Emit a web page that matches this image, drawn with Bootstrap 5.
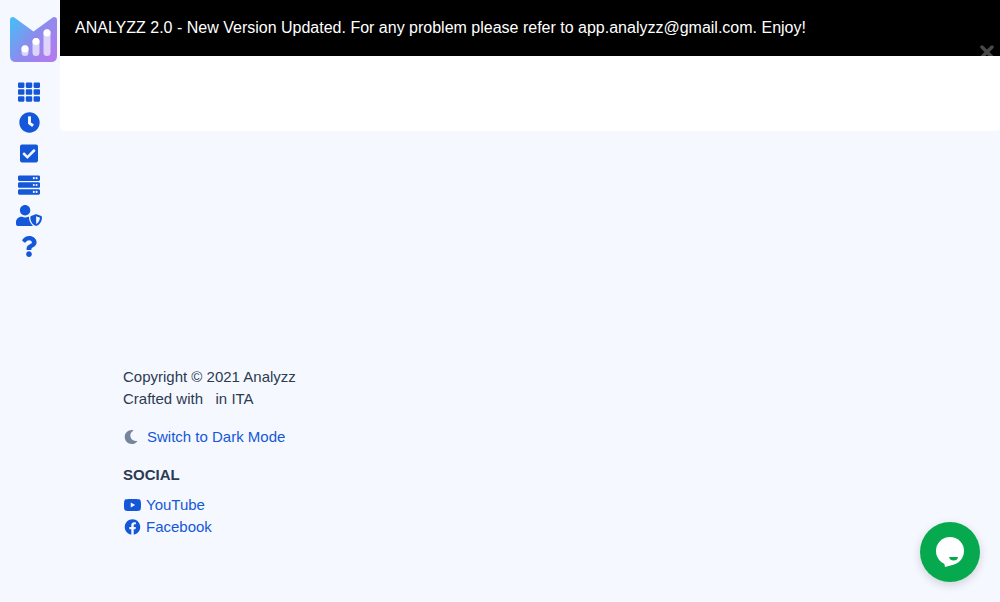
<!DOCTYPE html>
<html lang="en">
<head>
<meta charset="utf-8">
<meta name="viewport" content="width=device-width, initial-scale=1">
<title>Analyzz</title>
<link href="https://cdn.jsdelivr.net/npm/bootstrap@5.3.0/dist/css/bootstrap.min.css" rel="stylesheet">
<style>
  body { background: #f5f9ff; color: #2c3a52; font-family: "Liberation Sans", Arial, sans-serif; font-size: 15px; line-height: 22px; }
  a { color: #1457d9; text-decoration: none; }
  .side-rail { width: 60px; padding-top: 16px; }
  .side-rail .logo { display: block; margin-left: 10px; margin-bottom: 14px; }
  .side-rail .nav-link { height: 31px; padding: 0; color: #1457d9; width: 58px; }
  .side-rail svg, .site-footer svg { display: block; fill: currentColor; }
  .notice { height: 56px; background: #000; color: #fff; font-size: 16px; padding: 0 15px; }
  .notice .dismiss { top: 41px; right: 2px; padding: 4px; border: 0; background: none; color: #484848; line-height: 0; }
  .top-strip { height: 75px; background: #fff; }
  .site-footer { padding: 235px 63px 0; }
  .site-footer h6 { font-size: 15px; line-height: 22px; }
  .moon { color: #76849c; margin: 0 9px 0 1px; }
  .chat { right: 20px; bottom: 20px; width: 60px; height: 60px; background: #06a94d; box-shadow: 0 3px 10px rgba(0,0,0,.16); }
  .chat:hover { background: #06a94d; }
</style>
</head>
<body>
<div class="d-flex min-vh-100">
  <aside class="side-rail flex-shrink-0">
    <a class="logo" href="#" aria-label="Analyzz home">
      <svg width="47" height="46" viewBox="0 0 47 46">
        <defs><linearGradient id="brand" x1="0" y1="0" x2="1" y2=".7"><stop offset="0" stop-color="#43c0f8"/><stop offset=".55" stop-color="#8b8cee"/><stop offset="1" stop-color="#b07bee"/></linearGradient></defs>
        <path fill="url(#brand)" d="M0 4Q0 1 3 1Q4 1 5 2L23.500 15.500L42 2Q43 1 44 1Q47 1 47 4V40Q47 46 41 46H6Q0 46 0 40Z"/>
        <g fill="#fff" fill-opacity=".65"><rect x="11.500" y="29" width="7" height="11" rx="3.500"/><rect x="22.500" y="22" width="7" height="18" rx="3.500"/><rect x="33.500" y="13" width="7" height="27" rx="3.500"/></g>
        <g fill="#fff"><circle cx="15" cy="33" r="3.500"/><circle cx="26" cy="25.500" r="3.500"/><circle cx="37" cy="17" r="3.500"/></g>
      </svg>
    </a>
    <nav class="nav flex-column" aria-label="Main">
      <a class="nav-link d-flex align-items-center justify-content-center" href="#" aria-label="Dashboard"><svg width="22" height="22" viewBox="0 0 512 512"><path d="M24 32H126Q150 32 150 56V136Q150 160 126 160H24Q0 160 0 136V56Q0 32 24 32ZM205 32H307Q331 32 331 56V136Q331 160 307 160H205Q181 160 181 136V56Q181 32 205 32ZM386 32H488Q512 32 512 56V136Q512 160 488 160H386Q362 160 362 136V56Q362 32 386 32ZM24 192H126Q150 192 150 216V296Q150 320 126 320H24Q0 320 0 296V216Q0 192 24 192ZM205 192H307Q331 192 331 216V296Q331 320 307 320H205Q181 320 181 296V216Q181 192 205 192ZM386 192H488Q512 192 512 216V296Q512 320 488 320H386Q362 320 362 296V216Q362 192 386 192ZM24 352H126Q150 352 150 376V456Q150 480 126 480H24Q0 480 0 456V376Q0 352 24 352ZM205 352H307Q331 352 331 376V456Q331 480 307 480H205Q181 480 181 456V376Q181 352 205 352ZM386 352H488Q512 352 512 376V456Q512 480 488 480H386Q362 480 362 456V376Q362 352 386 352Z"/></svg></a>
      <a class="nav-link d-flex align-items-center justify-content-center" href="#" aria-label="History"><svg width="21" height="21" viewBox="0 0 512 512"><path d="M256 8C119 8 8 119 8 256s111 248 248 248 248-111 248-248S393 8 256 8zm57.100 350.100L224.900 294c-3.100-2.300-4.900-5.900-4.900-9.700V116c0-6.600 5.400-12 12-12h48c6.600 0 12 5.400 12 12v137.700l63.500 46.200c5.400 3.900 6.500 11.400 2.600 16.800l-28.200 38.800c-3.900 5.300-11.400 6.500-16.800 2.600z"/></svg></a>
      <a class="nav-link d-flex align-items-center justify-content-center" href="#" aria-label="Tasks"><svg width="18" height="21" viewBox="0 0 448 512"><path d="M400 480H48c-26.510 0-48-21.490-48-48V80c0-26.510 21.490-48 48-48h352c26.510 0 48 21.490 48 48v352c0 26.510-21.490 48-48 48zm-204.686-98.059l184-184c6.248-6.248 6.248-16.379 0-22.627l-22.627-22.627c-6.248-6.248-16.379-6.249-22.628 0L184 302.745l-70.059-70.059c-6.248-6.248-16.379-6.248-22.628 0l-22.627 22.627c-6.248 6.248-6.248 16.379 0 22.627l104 104c6.249 6.250 16.379 6.250 22.628.001z"/></svg></a>
      <a class="nav-link d-flex align-items-center justify-content-center" href="#" aria-label="Servers"><svg width="22" height="22" viewBox="0 0 512 512"><defs><path id="unit" fill-rule="evenodd" d="M480 160H32c-17.673 0-32-14.327-32-32V64c0-17.673 14.327-32 32-32h448c17.673 0 32 14.327 32 32v64c0 17.673-14.327 32-32 32zm-48-88a24 24 0 1 0 0 48a24 24 0 1 0 0-48zm-64 0a24 24 0 1 0 0 48a24 24 0 1 0 0-48z"/></defs><use href="#unit"/><use href="#unit" y="160"/><use href="#unit" y="320"/></svg></a>
      <a class="nav-link d-flex align-items-center justify-content-center" href="#" aria-label="Account"><svg width="26" height="21" viewBox="0 0 640 512"><path d="M622.300 271.100l-115.200-45c-4.100-1.600-12.600-3.700-22.200 0l-115.200 45c-10.700 4.200-17.700 14-17.700 24.900 0 111.600 68.700 188.800 132.900 213.900 9.600 3.700 18 1.600 22.200 0C558.400 489.900 640 420.500 640 296c0-10.900-7-20.700-17.700-24.900zM496 462.400V273.300l95.500 37.300c-5.600 87.100-60.900 135.400-95.500 151.800zM224 256c70.700 0 128-57.300 128-128S294.700 0 224 0 96 57.300 96 128s57.300 128 128 128zm96 40c0-2.500.8-4.800 1.100-7.200-2.500-.1-4.900-.8-7.500-.8h-16.700c-22.200 10.200-46.900 16-72.900 16s-50.600-5.800-72.900-16h-16.700C60.200 288 0 348.200 0 422.400V464c0 26.500 21.500 48 48 48h352c6.800 0 13.300-1.500 19.200-4-54-42.900-99.200-116.700-99.200-212z"/></svg></a>
      <a class="nav-link d-flex align-items-center justify-content-center" href="#" aria-label="Help"><svg width="16" height="21" viewBox="0 0 384 512"><path d="M202.021 0C122.202 0 70.503 32.703 29.914 91.026c-7.363 10.580-5.093 25.086 5.178 32.874l43.138 32.709c10.373 7.865 25.132 6.026 33.253-4.148 25.049-31.381 43.630-49.449 82.757-49.449 30.764 0 68.816 19.799 68.816 49.631 0 22.552-18.617 34.134-48.993 51.164-35.423 19.860-82.299 44.576-82.299 106.405V320c0 13.255 10.745 24 24 24h72.471c13.255 0 24-10.745 24-24v-5.773c0-42.860 125.268-44.645 125.268-160.627C377.504 66.256 286.902 0 202.021 0zM192 373.459c-38.196 0-69.271 31.075-69.271 69.271 0 38.195 31.075 69.270 69.271 69.270s69.271-31.075 69.271-69.271-31.075-69.270-69.271-69.270z"/></svg></a>
    </nav>
  </aside>

  <div class="flex-grow-1">
    <div class="notice d-flex align-items-center position-relative overflow-hidden" role="alert">
      <span>ANALYZZ 2.0 - New Version Updated. For any problem please refer to app.analyzz@gmail.com. Enjoy!</span>
      <button class="dismiss position-absolute" type="button" aria-label="Close"><svg width="14" height="14" viewBox="0 0 14 14"><path d="M2 2L12 12M12 2L2 12" stroke="currentColor" stroke-width="3.500" stroke-linecap="round"/></svg></button>
    </div>
    <header class="top-strip rounded-bottom-1"></header>
    <footer class="site-footer">
      <p class="mb-3">Copyright © 2021 Analyzz<br>Crafted with &nbsp; in ITA</p>
      <a class="d-flex align-items-center mb-3" href="#"><svg class="moon" width="14" height="14" viewBox="0 0 512 512"><path d="M283.211 512c78.962 0 151.079-35.925 198.857-94.792 7.068-8.708-.639-21.430-11.562-19.350-124.203 23.654-238.262-71.576-238.262-196.954 0-72.222 38.662-138.635 101.498-174.394 9.686-5.512 7.250-20.197-3.756-22.230A258.156 258.156 0 0 0 283.211 0c-141.309 0-256 114.511-256 256 0 141.309 114.511 256 256 256z"/></svg>Switch to Dark Mode</a>
      <h6 class="fw-bold mb-2">SOCIAL</h6>
      <ul class="list-unstyled mb-0">
        <li><a class="d-flex align-items-center gap-1" href="#"><svg width="19" height="16" viewBox="0 0 576 512"><path d="M549.655 124.083c-6.281-23.650-24.787-42.276-48.284-48.597C458.781 64 288 64 288 64S117.220 64 74.629 75.486c-23.497 6.322-42.003 24.947-48.284 48.597-11.412 42.867-11.412 132.305-11.412 132.305s0 89.438 11.412 132.305c6.281 23.650 24.787 41.500 48.284 47.821C117.220 448 288 448 288 448s170.780 0 213.371-11.486c23.497-6.321 42.003-24.171 48.284-47.821 11.412-42.867 11.412-132.305 11.412-132.305s0-89.438-11.412-132.305zm-317.510 213.508V175.185l142.739 81.205-142.739 81.201z"/></svg>YouTube</a></li>
        <li><a class="d-flex align-items-center gap-1" href="#"><svg width="19" height="16" viewBox="0 0 512 512"><path d="M504 256C504 119 393 8 256 8S8 119 8 256c0 123.780 90.690 226.380 209.250 245V327.690h-63V256h63v-54.640c0-62.150 37-96.480 93.670-96.480 27.140 0 55.520 4.840 55.520 4.840v61h-31.280c-30.800 0-40.410 19.120-40.410 38.730V256h68.780l-11 71.690h-57.780V501C413.310 482.380 504 379.780 504 256z"/></svg>Facebook</a></li>
      </ul>
    </footer>
  </div>
</div>
<button class="chat btn rounded-circle border-0 position-fixed p-0 d-flex align-items-center justify-content-center" type="button" aria-label="Open chat">
  <svg width="30" height="32" viewBox="0 0 30 32"><circle cx="15" cy="15" r="14" fill="#fff"/><path fill="#fff" d="M9 26L10 31Q17 30 23 26Z"/><path fill="#06a94d" d="M14 21H23Q22.500 24.500 18.500 24.500Q15 24.500 14 21Z"/></svg>
</button>
<script src="https://cdn.jsdelivr.net/npm/bootstrap@5.3.0/dist/js/bootstrap.bundle.min.js"></script>
</body>
</html>
